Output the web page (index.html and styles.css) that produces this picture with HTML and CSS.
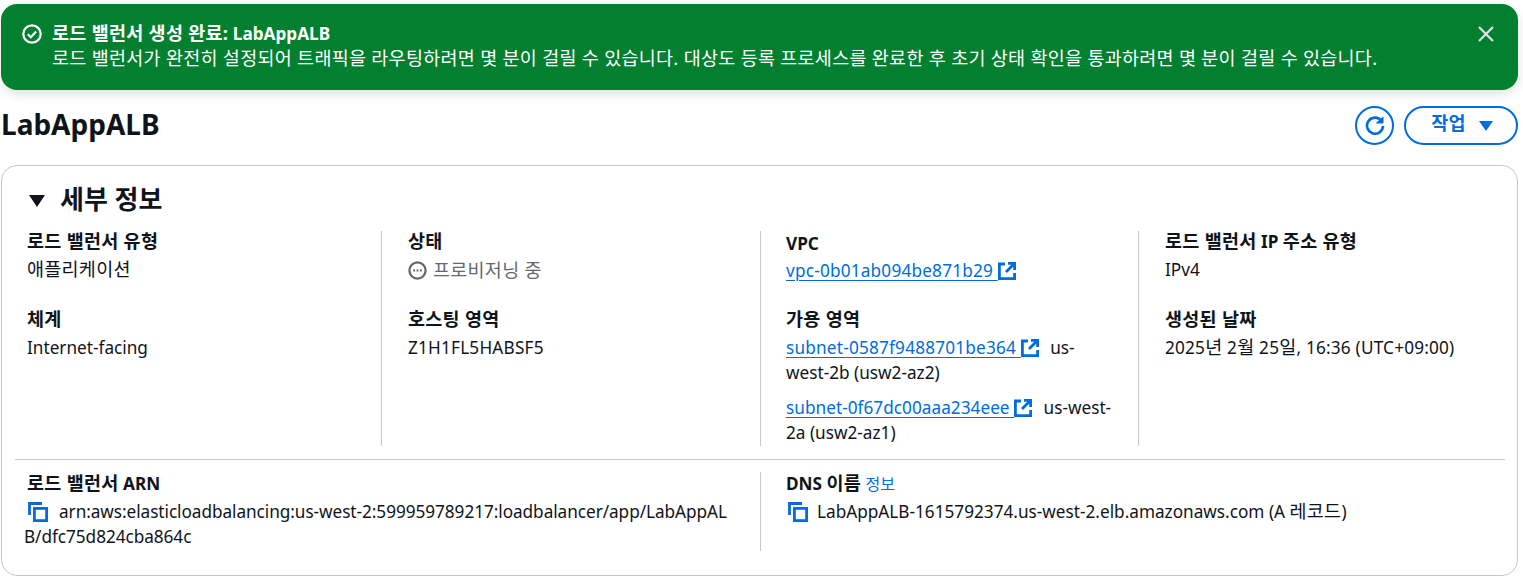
FILE: index.html

```html
<!DOCTYPE html>
<html lang="ko">
<head>
    <meta charset="UTF-8">
    <meta name="viewport" content="width=device-width, initial-scale=1.0">
    <title>LabAppALB</title>
    <link rel="stylesheet" href="styles.css">
</head>
<body>
    <svg class="defs" width="0" height="0">
        <symbol id="copy" viewBox="0 0 20 20">
            <path d="M1.5 13V1.5H14" fill="none" stroke="currentColor" stroke-width="2.8"/>
            <rect x="6.4" y="6.4" width="12.2" height="12.2" fill="none" stroke="currentColor" stroke-width="2.8"/>
        </symbol>
        <symbol id="ext" viewBox="0 0 18 18">
            <path d="M7 2H1.4V16.6H16.6V11" fill="none" stroke="currentColor" stroke-width="2.8"/>
            <path d="M10 1.4H16.6V8M16.2 1.8L8 10" fill="none" stroke="currentColor" stroke-width="2.8"/>
        </symbol>
    </svg>

    <div class="flash">
        <svg class="flash-icon" viewBox="0 0 20 20">
            <circle cx="10" cy="10" r="8.7" fill="none" stroke="currentColor" stroke-width="2.2"/>
            <path d="M5.8 10.2L8.8 13.2L14.2 7.4" fill="none" stroke="currentColor" stroke-width="2.2"/>
        </svg>
        <div class="flash-text">
            <div class="flash-title"><span class="ko">로드 밸런서 생성 완료:</span> LabAppALB</div>
            <div><span class="ko">로드 밸런서가 완전히 설정되어 트래픽을 라우팅하려면 몇 분이 걸릴 수 있습니다. 대상도 등록 프로세스를 완료한 후 초기 상태 확인을 통과하려면 몇 분이 걸릴 수 있습니다.</span></div>
        </div>
        <svg class="flash-close" viewBox="0 0 16 16">
            <path d="M1 1L15 15M15 1L1 15" fill="none" stroke="currentColor" stroke-width="2.2"/>
        </svg>
    </div>

    <div class="header">
        <h1>LabAppALB</h1>
        <div class="actions">
            <button class="btn-icon">
                <svg viewBox="0 0 20 20" width="20" height="20">
                    <path d="M16.5 5A8 8 0 1 0 18 10" fill="none" stroke="currentColor" stroke-width="2.6"/>
                    <path d="M11.5 7H18V1Z" fill="currentColor" stroke="currentColor" stroke-width="1"/>
                </svg>
            </button>
            <button class="btn-action"><span class="ko">작업</span> <span class="caret"></span></button>
        </div>
    </div>

    <div class="card">
        <h2><span class="caret-down"></span>세부 정보</h2>
        <div class="grid">
            <div class="col">
                <div class="item">
                    <div class="label"><span class="ko">로드 밸런서 유형</span></div>
                    <div><span class="ko">애플리케이션</span></div>
                </div>
                <div class="item">
                    <div class="label"><span class="ko">체계</span></div>
                    <div>Internet-facing</div>
                </div>
            </div>
            <div class="col">
                <div class="item">
                    <div class="label"><span class="ko">상태</span></div>
                    <div class="status">
                        <svg viewBox="0 0 20 20" width="19" height="19">
                            <circle cx="10" cy="10" r="8.5" fill="none" stroke="currentColor" stroke-width="2.4"/>
                            <path d="M5.5 10H7.5M9 10H11M12.5 10H14.5" fill="none" stroke="currentColor" stroke-width="2"/>
                        </svg>
                        <span class="ko">프로비저닝 중</span>
                    </div>
                </div>
                <div class="item">
                    <div class="label"><span class="ko">호스팅 영역</span></div>
                    <div class="code">Z1H1FL5HABSF5</div>
                </div>
            </div>
            <div class="col">
                <div class="item vpc">
                    <div class="label">VPC</div>
                    <div><a href="#">vpc-0b01ab094be871b29 </a><svg class="ext"><use href="#ext"/></svg></div>
                </div>
                <div class="item">
                    <div class="label"><span class="ko">가용 영역</span></div>
                    <div class="zone"><a href="#">subnet-0587f9488701be364 </a><svg class="ext"><use href="#ext"/></svg> us-west-2b (usw2-az2)</div>
                    <div class="zone"><a class="tight" href="#">subnet-0f67dc00aaa234eee </a><svg class="ext"><use href="#ext"/></svg> us-west-2a (usw2-az1)</div>
                </div>
            </div>
            <div class="col">
                <div class="item">
                    <div class="label"><span class="ko">로드 밸런서</span> IP <span class="ko">주소 유형</span></div>
                    <div>IPv4</div>
                </div>
                <div class="item">
                    <div class="label"><span class="ko">생성된 날짜</span></div>
                    <div class="code">2025<span class="ko">년</span> 2<span class="ko">월</span> 25<span class="ko">일</span>, 16:36 (UTC+09:00)</div>
                </div>
            </div>
        </div>
        <div class="bottom">
            <div class="col">
                <div class="label"><span class="ko">로드 밸런서</span> ARN</div>
                <div class="arn"><svg class="copy"><use href="#copy"/></svg>arn:aws:elasticloadbalancing:us-west-2:599959789217:loadbalancer/app/LabAppALB/dfc75d824cba864c</div>
            </div>
            <div class="col">
                <div class="label">DNS <span class="ko">이름</span> <a class="info" href="#">정보</a></div>
                <div class="dns"><svg class="copy"><use href="#copy"/></svg>LabAppALB-1615792374.us-west-2.elb.amazonaws.com (A <span class="ko">레코드</span>)</div>
            </div>
        </div>
    </div>
</body>
</html>
```

FILE: styles.css

```css
* {
    box-sizing: border-box;
}
body {
    margin: 0;
    font-family: "Noto Sans", "Noto Sans CJK KR", sans-serif;
    font-size: 17.2px;
    line-height: 24px;
    color: #0f141a;
    background: white;
}
.defs {
    position: absolute;
}
a {
    color: #006ce0;
    text-underline-offset: 3px;
    text-decoration-thickness: 1px;
}
/* hangul runs in the reference are wider than the latin around them */
.ko {
    font-size: 18.5px;
    line-height: 1;
    letter-spacing: 0.27px;
}
.flash {
    display: flex;
    margin: 4px 5px 0 1px;
    height: 86px;
    padding: 17px 24px 0 21px;
    background-color: #037f30;
    color: white;
    border-radius: 16px;
    box-shadow: 0 4px 12px rgba(0, 7, 22, 0.12);
}
.flash-icon {
    width: 20px;
    height: 20px;
    margin: 3px 10px 0 0;
    flex: none;
}
.flash-text {
    flex: 1;
    line-height: 25px;
}
.flash-title {
    font-weight: 700;
}
.flash-close {
    width: 16px;
    height: 16px;
    margin-top: 5px;
    color: #e4e4e4;
}
.header {
    display: flex;
    justify-content: space-between;
    align-items: center;
    margin: 16px 5px 20px 1px;
    height: 39px;
}
h1 {
    margin: 0 0 4px;
    font-size: 28px;
    line-height: 36px;
    font-weight: 700;
}
.actions {
    display: flex;
    gap: 10px;
}
.btn-icon, .btn-action {
    height: 39px;
    background: white;
    border: 2px solid #006ce0;
    border-radius: 20px;
    color: #006ce0;
    font-family: inherit;
    font-size: 16px;
    font-weight: 700;
    display: flex;
    align-items: center;
    justify-content: center;
}
.btn-icon {
    width: 39px;
    padding: 0;
}
.btn-action {
    width: 114px;
    gap: 13px;
    padding: 0 0 4px 2px;
}
.caret {
    width: 0;
    height: 0;
    margin-top: 4px;
    border-left: 7px solid transparent;
    border-right: 7px solid transparent;
    border-top: 10px solid #006ce0;
}
.card {
    margin: 0 5px 0 1px;
    height: 411px;
    border: 1px solid #c6c6cd;
    border-radius: 16px;
    padding: 0 12px 0 13px;
}
h2 {
    margin: 0;
    padding: 15px 0 0 14px;
    height: 65px;
    font-size: 26px;
    line-height: 36px;
    font-weight: 700;
    display: flex;
    align-items: flex-start;
}
.caret-down {
    width: 0;
    height: 0;
    margin: 14px 15px 0 0;
    border-left: 8px solid transparent;
    border-right: 8px solid transparent;
    border-top: 12px solid #0f141a;
}
.grid {
    display: grid;
    grid-template-columns: 366px 379px 378px 1fr;
    height: 215px;
}
.grid .col {
    padding: 0 24px 0 26px;
    border-left: 1px solid #c6c6cd;
}
.grid .col:first-child {
    border-left: none;
    padding-left: 12px;
}
.grid .col:nth-child(3) {
    padding-left: 25px;
}
.item {
    margin-bottom: 26px;
}
.item:first-child {
    margin-top: -1px;
}
.item:last-child {
    margin-bottom: 0;
}
.item.vpc {
    margin: 1px 0 25px;
}
.vpc .label {
    padding-bottom: 3px;
}
.label {
    font-weight: 700;
    line-height: 24px;
    padding-bottom: 4px;
}
.status {
    color: #656871;
    display: flex;
    align-items: center;
    gap: 6px;
    height: 24px;
}
.code, .grid a {
    letter-spacing: 0.2px;
}
.grid a.tight {
    letter-spacing: 0.03px;
}
.ext {
    width: 18px;
    height: 18px;
    margin: 0 7px 0 0;
    color: #006ce0;
    vertical-align: -3px;
}
.zone {
    margin-bottom: 11px;
    line-height: 24.5px;
}
.zone:last-child {
    margin-bottom: 0;
}
.bottom {
    display: grid;
    grid-template-columns: 745px 1fr;
    margin-top: 13px;
    border-top: 1px solid #c6c6cd;
    padding-top: 12px;
}
.bottom .col {
    height: 79px;
    padding: 0 24px 0 12px;
    word-break: break-all;
}
.bottom .col + .col {
    border-left: 1px solid #c6c6cd;
    padding-left: 25px;
}
.bottom .label {
    padding-bottom: 3px;
}
.info {
    font-size: 16px;
    font-weight: 400;
    text-decoration: none;
}
.copy {
    width: 20px;
    height: 20px;
    color: #006ce0;
    vertical-align: -4px;
    margin: 0 9px 0 2px;
}
.arn {
    margin-left: -3px;
    line-height: 25px;
    letter-spacing: -0.05px;
}
.arn .copy {
    margin: 0 11px 0 4px;
}
.dns {
    line-height: 25px;
}
```
